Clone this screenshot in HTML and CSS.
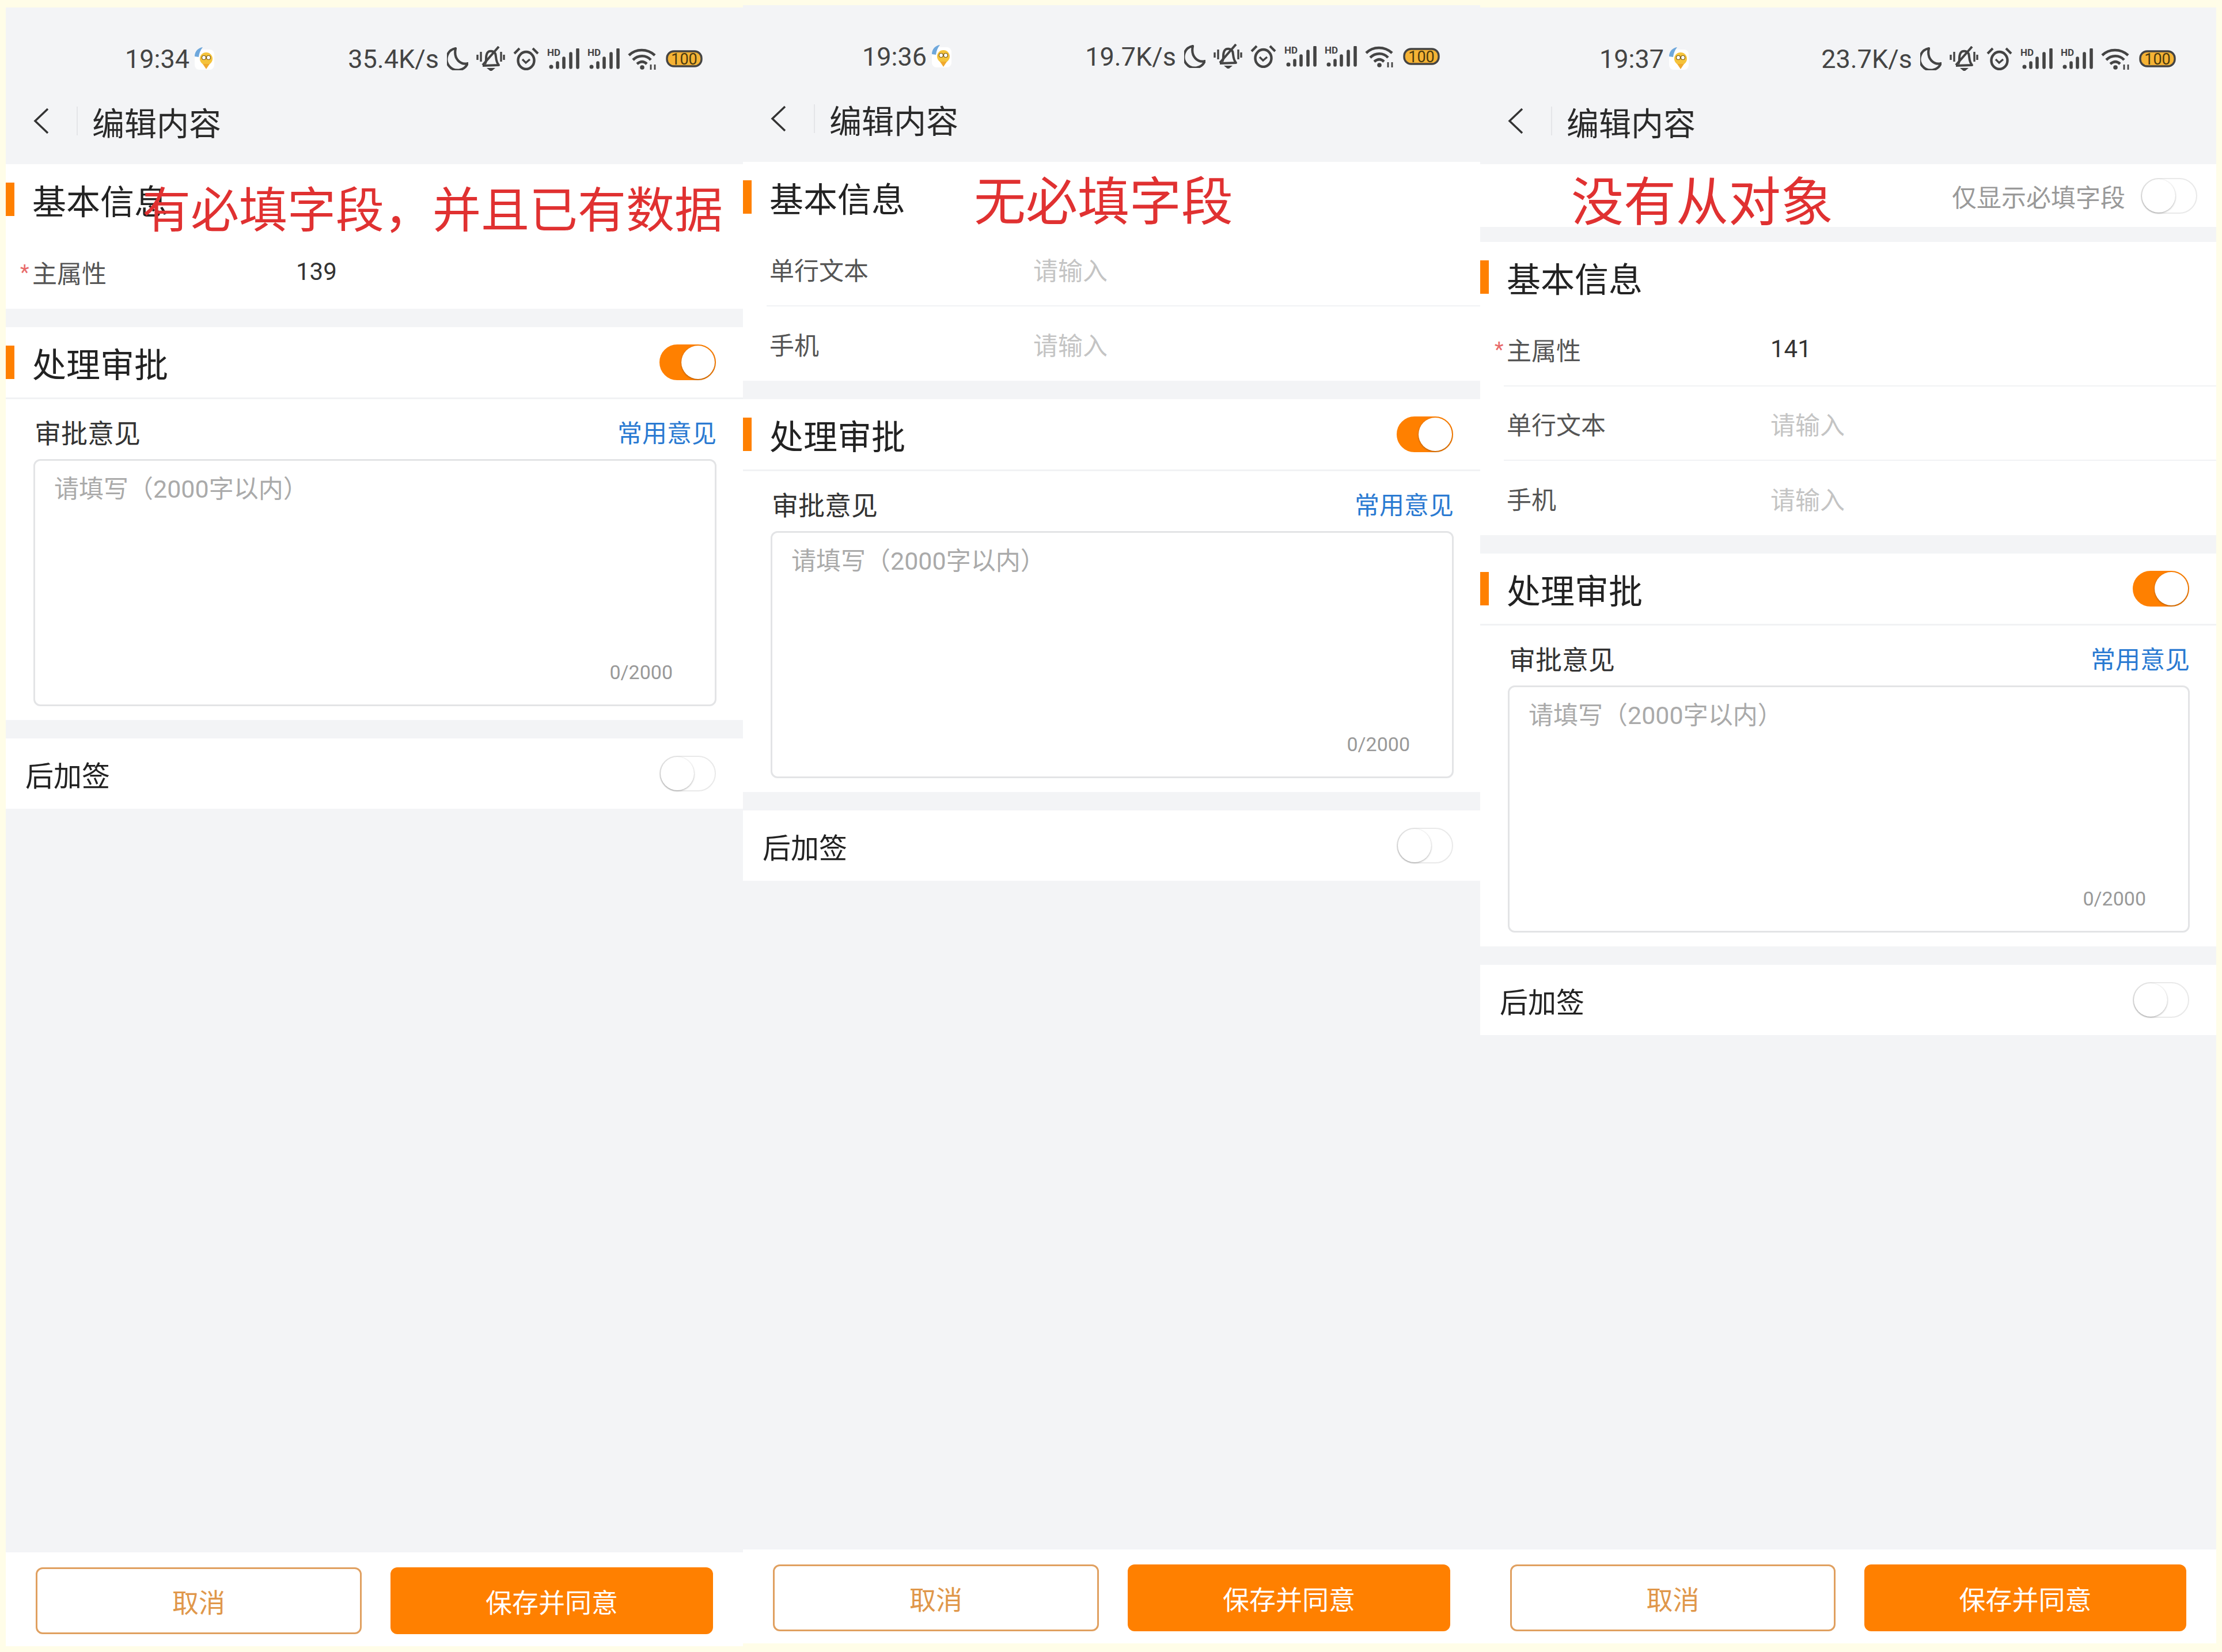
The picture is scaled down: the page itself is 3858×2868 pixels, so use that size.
FILE: index.html
```html
<!DOCTYPE html>
<html lang="zh-CN">
<head>
    <meta charset="UTF-8">
    <title>编辑内容</title>
    <link rel="stylesheet" href="styles.css">
</head>
<body>
    <svg class="defs">
        <symbol id="i-back" viewBox="0 0 27 46">
            <polyline points="25,2 3,23 25,44" fill="none" stroke="#333" stroke-width="3.5"/>
        </symbol>
        <symbol id="i-bee" viewBox="0 0 36 40">
            <rect x="1" y="4" width="34" height="35" rx="8" fill="#fff"/>
            <path d="M1 16 C1 7 7 1 15 0 C11 5 9 10 8 17 Z" fill="#6fa8dc"/>
            <ellipse cx="21" cy="20" rx="11" ry="11" fill="#f5c33b"/>
            <path d="M15 29 L27 29 L21 38 Z" fill="#f0a92e"/>
            <circle cx="17" cy="18" r="3.500" fill="#fff" stroke="#7a5a10" stroke-width="1.200"/>
            <circle cx="25" cy="18" r="3.500" fill="#fff" stroke="#7a5a10" stroke-width="1.200"/>
        </symbol>
        <symbol id="i-moon" viewBox="0 0 37 40">
            <path d="M15 2 A19 19 0 1 0 36 28 C24 31 11 21 15 2 Z" fill="none" stroke="#444" stroke-width="4.200" stroke-linejoin="round"/>
        </symbol>
        <symbol id="i-bell" viewBox="0 0 50 44">
            <path d="M15 31 C19 26 15 19 19 12 C22 7 30 8 33 13 C35 19 33 26 39 33 L11 34" fill="none" stroke="#444" stroke-width="4" stroke-linejoin="round"/>
            <line x1="39" y1="1" x2="11" y2="33" stroke="#444" stroke-width="4"/>
            <path d="M18 38 H33 L27 43 H24 Z" fill="#444"/>
            <path d="M2 15 V24 M8 10 V27 M43 10 V27 M48 15 V24" stroke="#444" stroke-width="3.400" fill="none"/>
        </symbol>
        <symbol id="i-alarm" viewBox="0 0 45 40">
            <ellipse cx="22.500" cy="23" rx="14" ry="15" fill="none" stroke="#444" stroke-width="4.400"/>
            <polyline points="16,21 22,27 29,21" fill="none" stroke="#444" stroke-width="3.400"/>
            <path d="M2 11 L11 2 M43 11 L34 2" stroke="#444" stroke-width="4.200"/>
        </symbol>
        <symbol id="i-signal" viewBox="0 0 56 36">
            <text x="0" y="13" class="hd-text">HD</text>
            <circle cx="7" cy="32" r="3.500" fill="#444"/>
            <path d="M18 33 V25 M29 33 V17 M41 33 V9 M53 33 V2" stroke="#444" stroke-width="5.600" stroke-linecap="round" fill="none"/>
        </symbol>
        <symbol id="i-wifi" viewBox="0 0 52 38">
            <path d="M2 13 C14 1 34 1 47 13 M9 21 C18 12 32 12 40 21 M16 28 C22 23 28 23 33 28" fill="none" stroke="#444" stroke-width="4.600"/>
            <circle cx="25" cy="34" r="3.800" fill="#444"/>
            <path d="M40 29 V38 M47 29 V38" stroke="#444" stroke-width="2.800"/>
        </symbol>
        <symbol id="i-battery" viewBox="0 0 64 30">
            <rect x="2" y="2" width="60" height="26" rx="12" fill="#f5b335" stroke="#444" stroke-width="3.400"/>
            <text x="32" y="24.500" class="bat-text">100</text>
        </symbol>
    </svg>

    <div class="page">
        <!-- 有必填字段 -->
        <div class="phone phone-a">
            <header class="top">
                <div class="status">
                    <span class="time">19:34</span>
                    <svg class="bee"><use href="#i-bee"/></svg>
                    <div class="status-right">
                        <span class="speed">35.4K/s</span>
                        <svg class="moon"><use href="#i-moon"/></svg>
                        <svg class="bell"><use href="#i-bell"/></svg>
                        <svg class="alarm"><use href="#i-alarm"/></svg>
                        <svg class="signal"><use href="#i-signal"/></svg>
                        <svg class="signal"><use href="#i-signal"/></svg>
                        <svg class="wifi"><use href="#i-wifi"/></svg>
                        <svg class="battery"><use href="#i-battery"/></svg>
                    </div>
                </div>
                <div class="nav">
                    <svg class="back"><use href="#i-back"/></svg>
                    <span class="nav-sep"></span>
                    <span class="nav-title">编辑内容</span>
                </div>
            </header>
            <section class="card">
                <div class="sec-head"><h2>基本信息</h2></div>
                <div class="field"><label><span class="star">*</span>主属性</label><span class="value">139</span></div>
            </section>
            <section class="card">
                <div class="sec-head sec-line">
                    <h2>处理审批</h2>
                    <span class="toggle on"><i class="knob"></i></span>
                </div>
                <div class="opinion">
                    <div class="opinion-top"><span class="opinion-label">审批意见</span><a class="link">常用意见</a></div>
                    <div class="textbox">
                        <span class="hint">请填写（2000字以内）</span>
                        <span class="count">0/2000</span>
                    </div>
                </div>
            </section>
            <section class="card switch-row">
                <span>后加签</span>
                <span class="toggle"><i class="knob"></i></span>
            </section>
            <div class="filler"></div>
            <footer class="actions">
                <button class="btn btn-cancel">取消</button>
                <button class="btn btn-ok">保存并同意</button>
            </footer>
            <div class="note note-a">有必填字段，并且已有数据</div>
        </div>

        <!-- 无必填字段 -->
        <div class="phone phone-b">
            <header class="top">
                <div class="status">
                    <span class="time">19:36</span>
                    <svg class="bee"><use href="#i-bee"/></svg>
                    <div class="status-right">
                        <span class="speed">19.7K/s</span>
                        <svg class="moon"><use href="#i-moon"/></svg>
                        <svg class="bell"><use href="#i-bell"/></svg>
                        <svg class="alarm"><use href="#i-alarm"/></svg>
                        <svg class="signal"><use href="#i-signal"/></svg>
                        <svg class="signal"><use href="#i-signal"/></svg>
                        <svg class="wifi"><use href="#i-wifi"/></svg>
                        <svg class="battery"><use href="#i-battery"/></svg>
                    </div>
                </div>
                <div class="nav">
                    <svg class="back"><use href="#i-back"/></svg>
                    <span class="nav-sep"></span>
                    <span class="nav-title">编辑内容</span>
                </div>
            </header>
            <section class="card">
                <div class="sec-head"><h2>基本信息</h2></div>
                <div class="field"><label>单行文本</label><span class="empty">请输入</span></div>
                <div class="field"><label>手机</label><span class="empty">请输入</span></div>
            </section>
            <section class="card">
                <div class="sec-head sec-line">
                    <h2>处理审批</h2>
                    <span class="toggle on"><i class="knob"></i></span>
                </div>
                <div class="opinion">
                    <div class="opinion-top"><span class="opinion-label">审批意见</span><a class="link">常用意见</a></div>
                    <div class="textbox">
                        <span class="hint">请填写（2000字以内）</span>
                        <span class="count">0/2000</span>
                    </div>
                </div>
            </section>
            <section class="card switch-row">
                <span>后加签</span>
                <span class="toggle"><i class="knob"></i></span>
            </section>
            <div class="filler"></div>
            <footer class="actions">
                <button class="btn btn-cancel">取消</button>
                <button class="btn btn-ok">保存并同意</button>
            </footer>
            <div class="note note-b">无必填字段</div>
        </div>

        <!-- 没有从对象 -->
        <div class="phone phone-c">
            <header class="top">
                <div class="status">
                    <span class="time">19:37</span>
                    <svg class="bee"><use href="#i-bee"/></svg>
                    <div class="status-right">
                        <span class="speed">23.7K/s</span>
                        <svg class="moon"><use href="#i-moon"/></svg>
                        <svg class="bell"><use href="#i-bell"/></svg>
                        <svg class="alarm"><use href="#i-alarm"/></svg>
                        <svg class="signal"><use href="#i-signal"/></svg>
                        <svg class="signal"><use href="#i-signal"/></svg>
                        <svg class="wifi"><use href="#i-wifi"/></svg>
                        <svg class="battery"><use href="#i-battery"/></svg>
                    </div>
                </div>
                <div class="nav">
                    <svg class="back"><use href="#i-back"/></svg>
                    <span class="nav-sep"></span>
                    <span class="nav-title">编辑内容</span>
                </div>
            </header>
            <section class="card filter-row">
                <span class="filter-text">仅显示必填字段</span>
                <span class="toggle"><i class="knob"></i></span>
            </section>
            <section class="card">
                <div class="sec-head"><h2>基本信息</h2></div>
                <div class="field"><label><span class="star">*</span>主属性</label><span class="value">141</span></div>
                <div class="field"><label>单行文本</label><span class="empty">请输入</span></div>
                <div class="field"><label>手机</label><span class="empty">请输入</span></div>
            </section>
            <section class="card">
                <div class="sec-head sec-line">
                    <h2>处理审批</h2>
                    <span class="toggle on"><i class="knob"></i></span>
                </div>
                <div class="opinion">
                    <div class="opinion-top"><span class="opinion-label">审批意见</span><a class="link">常用意见</a></div>
                    <div class="textbox">
                        <span class="hint">请填写（2000字以内）</span>
                        <span class="count">0/2000</span>
                    </div>
                </div>
            </section>
            <section class="card switch-row">
                <span>后加签</span>
                <span class="toggle"><i class="knob"></i></span>
            </section>
            <div class="filler"></div>
            <footer class="actions">
                <button class="btn btn-cancel">取消</button>
                <button class="btn btn-ok">保存并同意</button>
            </footer>
            <div class="note note-c">没有从对象</div>
        </div>
    </div>
</body>
</html>
```

FILE: styles.css
```css
* {
    box-sizing: border-box;
}
body {
    margin: 0;
    background-color: #fffde8;
    font-family: Roboto, "Noto Sans CJK SC", sans-serif;
    color: #222;
    overflow: hidden;
}
.defs {
    display: none;
}
.page {
    display: flex;
    height: 2868px;
    padding-left: 10px;
}
.phone {
    position: relative;
    display: flex;
    flex-direction: column;
    width: 1280px;
    background-color: #f3f4f6;
}
.phone-a {
    margin-top: 13px;
    margin-bottom: 10px;
}
.phone-b {
    margin-top: 9px;
    margin-bottom: 15px;
}
.phone-c {
    margin-top: 13px;
    margin-bottom: 15px;
    width: 1278px;
}

/* status bar + title */
.top {
    height: 272px;
    padding-top: 24px;
}
.status {
    display: flex;
    align-items: center;
    height: 130px;
    padding: 0 70px 0 207px;
    color: #444;
}
.time {
    font-size: 45px;
    margin-right: 8px;
}
.status-right {
    display: flex;
    align-items: center;
    gap: 14px;
    margin-left: auto;
}
.speed {
    font-size: 45px;
}
.bee {
    width: 36px;
    height: 40px;
}
.moon {
    width: 37px;
    height: 40px;
}
.bell {
    width: 50px;
    height: 44px;
}
.alarm {
    width: 45px;
    height: 40px;
}
.signal {
    width: 56px;
    height: 36px;
}
.wifi {
    width: 52px;
    height: 38px;
}
.battery {
    width: 64px;
    height: 30px;
}
.hd-text {
    font-family: Roboto, sans-serif;
    font-size: 17px;
    font-weight: 700;
    fill: #444;
}
.bat-text {
    font-family: Roboto, sans-serif;
    font-size: 27px;
    text-anchor: middle;
    fill: #4a3a10;
}
.nav {
    display: flex;
    align-items: center;
    height: 86px;
    padding-left: 48px;
}
.back {
    width: 27px;
    height: 46px;
}
.nav-sep {
    width: 2px;
    height: 50px;
    margin-left: 48px;
    background-color: #e4e5e8;
}
.nav-title {
    margin-left: 25px;
    font-size: 56px;
    color: #2a2a2a;
}

/* white blocks */
.card {
    background-color: #fff;
    margin-bottom: 32px;
}
.sec-head {
    display: flex;
    align-items: center;
    justify-content: space-between;
    height: 122px;
    padding-right: 47px;
}
.sec-head::before {
    content: "";
    width: 15px;
    height: 58px;
    background-color: #ff8000;
}
.sec-head h2 {
    flex: 1;
    margin: 0 0 0 31px;
    font-size: 59px;
    font-weight: 400;
}
.sec-line {
    height: 125px;
    border-bottom: 3px solid #f1f2f4;
}
.field {
    display: flex;
    align-items: center;
    height: 129px;
    margin-left: 41px;
    padding-left: 5px;
    font-size: 43px;
    border-bottom: 2px solid #f1f2f4;
}
.field:last-child {
    border-bottom: none;
}
.field label {
    width: 458px;
    color: #555;
}
.star {
    display: inline-block;
    width: 21px;
    margin-left: -21px;
    font-size: 36px;
    color: #e86a6a;
    vertical-align: 6px;
}
.value {
    font-size: 42px;
    color: #333;
}
.empty {
    color: #c4c4c4;
}

/* approval block */
.opinion {
    padding: 0 46px 24px 48px;
}
.opinion-top {
    display: flex;
    align-items: center;
    justify-content: space-between;
    height: 104px;
    padding-top: 8px;
}
.opinion-label {
    font-size: 46px;
    color: #333;
    margin-left: 2px;
}
.link {
    font-size: 43px;
    color: #2a7ad2;
}
.textbox {
    display: flex;
    flex-direction: column;
    justify-content: space-between;
    height: 429px;
    padding: 14px 73px 36px 33px;
    border: 3px solid #e3e4e6;
    border-radius: 12px;
}
.hint {
    font-size: 43px;
    color: #aaa;
}
.count {
    align-self: flex-end;
    font-size: 34px;
    color: #999;
}
.switch-row {
    display: flex;
    align-items: center;
    justify-content: space-between;
    height: 122px;
    margin-bottom: 0;
    padding: 0 47px 0 34px;
    font-size: 49px;
}
.filter-row {
    display: flex;
    align-items: center;
    justify-content: flex-end;
    gap: 27px;
    height: 109px;
    margin-bottom: 26px;
    padding-right: 33px;
}
.filter-text {
    font-size: 43px;
    color: #999;
}

/* toggle */
.toggle {
    display: flex;
    flex: none;
    width: 98px;
    height: 62px;
    border: 2px solid #e9e9e9;
    border-radius: 31px;
    background-color: #fff;
}
.toggle.on {
    justify-content: flex-end;
    border-color: #ff8000;
    background-color: #ff8000;
}
.knob {
    width: 58px;
    height: 58px;
    border-radius: 50%;
    background-color: #fff;
    box-shadow: 0 1px 3px rgba(0, 0, 0, 0.35);
}

/* bottom buttons */
.filler {
    flex: 1;
}
.actions {
    display: flex;
    gap: 50px;
    height: 163px;
    padding: 26px 52px 0 52px;
    background-color: #fff;
}
.btn {
    flex: 1;
    height: 116px;
    font-family: inherit;
    font-size: 46px;
    border-radius: 12px;
}
.btn-cancel {
    color: #e0974a;
    background-color: #fff;
    border: 3px solid #e0a060;
}
.btn-ok {
    color: #fff;
    background-color: #ff8000;
    border: none;
}

/* red notes pasted over the shots */
.note {
    position: absolute;
    color: #e03131;
    white-space: nowrap;
    line-height: 1;
}
.note-a {
    left: 237px;
    top: 312px;
    font-size: 84px;
}
.note-b {
    left: 401px;
    top: 298px;
    font-size: 90px;
}
.note-c {
    left: 158px;
    top: 294px;
    font-size: 91px;
}
```
